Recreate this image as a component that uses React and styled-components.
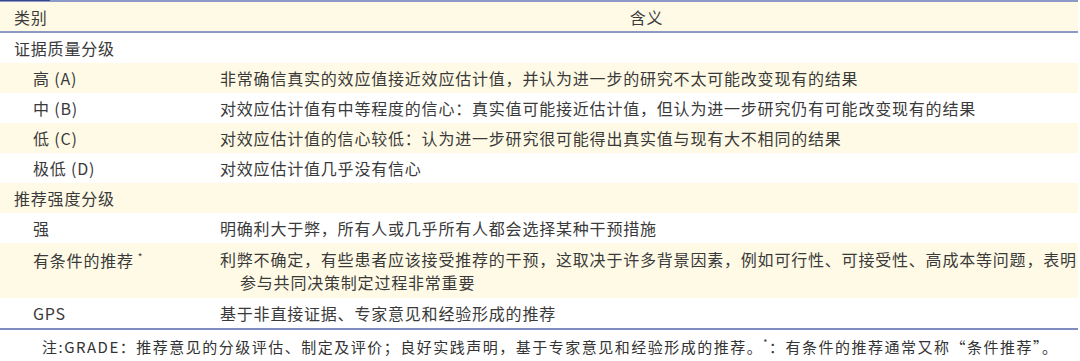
import React from 'react'
import styled, { createGlobalStyle } from 'styled-components'

const GlobalStyle = createGlobalStyle`
  html, body {
    margin: 0;
    padding: 0;
    background: #ffffff;
  }
  body {
    font-family: "Noto Sans CJK SC", "Noto Sans", sans-serif;
    color: #3a3a3a;
  }
`

const rows = [
  { kind: 'section', label: '证据质量分级' },
  { kind: 'item', label: '高 (A)', text: ['非常确信真实的效应值接近效应估计值，并认为进一步的研究不太可能改变现有的结果'], tint: true },
  { kind: 'item', label: '中 (B)', text: ['对效应估计值有中等程度的信心：真实值可能接近估计值，但认为进一步研究仍有可能改变现有的结果'] },
  { kind: 'item', label: '低 (C)', text: ['对效应估计值的信心较低：认为进一步研究很可能得出真实值与现有大不相同的结果'], tint: true },
  { kind: 'item', label: '极低 (D)', text: ['对效应估计值几乎没有信心'] },
  { kind: 'section', label: '推荐强度分级', tint: true },
  { kind: 'item', label: '强', text: ['明确利大于弊，所有人或几乎所有人都会选择某种干预措施'] },
  {
    kind: 'item',
    label: '有条件的推荐',
    mark: true,
    text: [
      '利弊不确定，有些患者应该接受推荐的干预，这取决于许多背景因素，例如可行性、可接受性、高成本等问题，表明',
      '参与共同决策制定过程非常重要',
    ],
    tint: true,
  },
  { kind: 'item', label: 'GPS', text: ['基于非直接证据、专家意见和经验形成的推荐'] },
]

export default function App() {
  return (
    <>
      <GlobalStyle />
      <Table>
        <TopRule>
          <TopMark />
        </TopRule>
        <HeadRow>
          <HeadCell>类别</HeadCell>
          <HeadCell center>含义</HeadCell>
        </HeadRow>
        <Rule />
        {rows.map((r) =>
          r.kind === 'section' ? (
            <Row key={r.label} tint={r.tint}>
              <SectionLabel>{r.label}</SectionLabel>
            </Row>
          ) : (
            <Row key={r.label} tint={r.tint} tall={r.text.length > 1}>
              <ItemLabel>
                {r.label}
                {r.mark && <Sup>*</Sup>}
              </ItemLabel>
              <Meaning>
                {r.text.map((t, i) => (
                  <Line key={i} indent={i > 0}>{t}</Line>
                ))}
              </Meaning>
            </Row>
          )
        )}
        <BottomRule />
        <Note>
          注:GRADE：推荐意见的分级评估、制定及评价；良好实践声明，基于专家意见和经验形成的推荐。<NoteSup>*</NoteSup>：有条件的推荐通常又称“条件推荐”。
        </Note>
      </Table>
    </>
  )
}

const Table = styled.div`
  width: 1078px;
  display: flex;
  flex-direction: column;
  font-size: 16px;
  letter-spacing: 0.8px;
`

const TopRule = styled.div`
  height: 2px;
  background: #8d9ac8;
  display: flex;
`

const TopMark = styled.div`
  width: 50px;
  height: 1px;
  background: #33468c;
`

const HeadRow = styled.div`
  height: 29px;
  background: #fffae6;
  display: grid;
  grid-template-columns: 215px 1fr;
  align-items: center;
`

const HeadCell = styled.div`
  padding-left: ${(p) => (p.center ? '0' : '14px')};
  text-align: ${(p) => (p.center ? 'center' : 'left')};
`

const Rule = styled.div`
  height: 2px;
  background: #8d9ac8;
`

const Row = styled.div`
  height: ${(p) => (p.tall ? '55px' : '30px')};
  background: ${(p) => (p.tint ? '#fffae6' : '#ffffff')};
  display: grid;
  grid-template-columns: 215px 1fr;
  align-items: ${(p) => (p.tall ? 'start' : 'center')};
  padding-top: ${(p) => (p.tall ? '5px' : '0')};
  box-sizing: border-box;
`

const SectionLabel = styled.div`
  padding-left: 14px;
  grid-column: 1 / 3;
`

const ItemLabel = styled.div`
  padding-left: 33px;
  white-space: nowrap;
`

const Sup = styled.span`
  font-size: 10px;
  vertical-align: 6px;
  margin-left: 4px;
`

const Meaning = styled.div`
  padding-left: 5px;
  display: flex;
  flex-direction: column;
  line-height: 23px;
`

const Line = styled.span`
  white-space: nowrap;
  padding-left: ${(p) => (p.indent ? '20px' : '0')};
`

const BottomRule = styled.div`
  height: 2px;
  background: #7f8cc0;
`

const Note = styled.div`
  height: 32px;
  display: flex;
  align-items: center;
  padding-left: 42px;
  font-size: 15px;
  letter-spacing: 1.5px;
  white-space: nowrap;
  color: #333333;
`

const NoteSup = styled.span`
  font-size: 9px;
  align-self: flex-start;
  margin-top: 6px;
`
